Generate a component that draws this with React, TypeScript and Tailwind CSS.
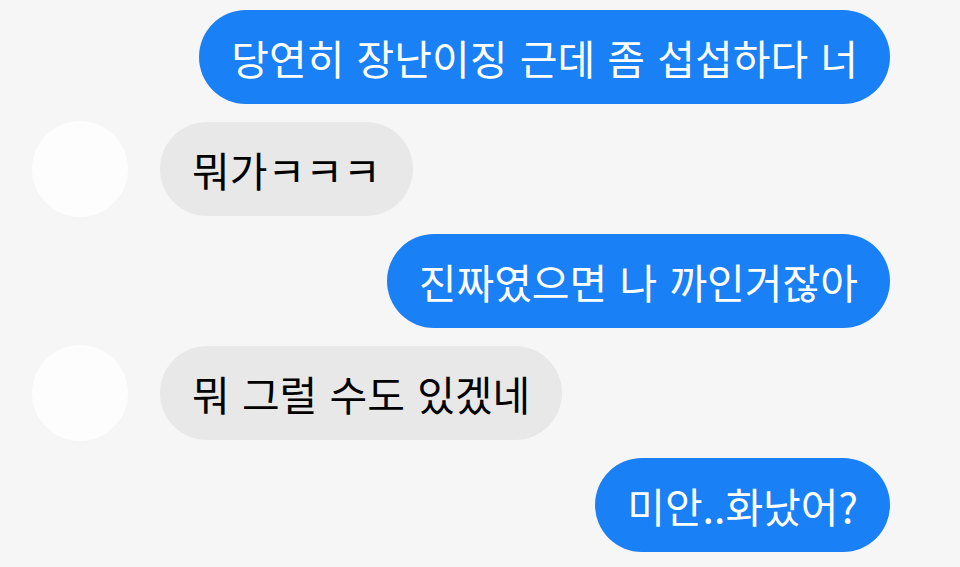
import React from "react";

type Msg = { id: number; mine: boolean; text: string; avatar?: boolean };

const MESSAGES: Msg[] = [
  { id: 1, mine: true, text: "당연히 장난이징 근데 좀 섭섭하다 너" },
  { id: 2, mine: false, text: "뭐가ㅋㅋㅋ", avatar: true },
  { id: 3, mine: true, text: "진짜였으면 나 까인거잖아" },
  { id: 4, mine: false, text: "뭐 그럴 수도 있겠네", avatar: true },
  { id: 5, mine: true, text: "미안..화났어?" },
];

const FONT = { fontFamily: '"Noto Sans CJK KR", "Noto Sans", sans-serif' };

export default function App() {
  return (
    <div
      className="flex h-[567px] w-[960px] flex-col gap-[18px] overflow-hidden bg-[#f6f6f6] pt-[10px]"
      style={FONT}
    >
      {MESSAGES.map((m) =>
        m.mine ? (
          <div key={m.id} className="flex h-[94px] justify-end pr-[70px]">
            <div className="flex h-[94px] items-center rounded-full bg-[#1a80f5] px-[32px] text-[41px] leading-none text-white [word-spacing:3px]">
              {m.text}
            </div>
          </div>
        ) : (
          <div key={m.id} className="flex h-[94px] items-center gap-[32px] pl-[32px]">
            <div className="h-[96px] w-[96px] shrink-0 rounded-full bg-[#fdfdfd]" />
            <div className="flex h-[94px] items-center rounded-full bg-[#e8e8e8] px-[32px] text-[41px] leading-none text-black [word-spacing:3px]">
              {m.text}
            </div>
          </div>
        )
      )}
    </div>
  );
}
